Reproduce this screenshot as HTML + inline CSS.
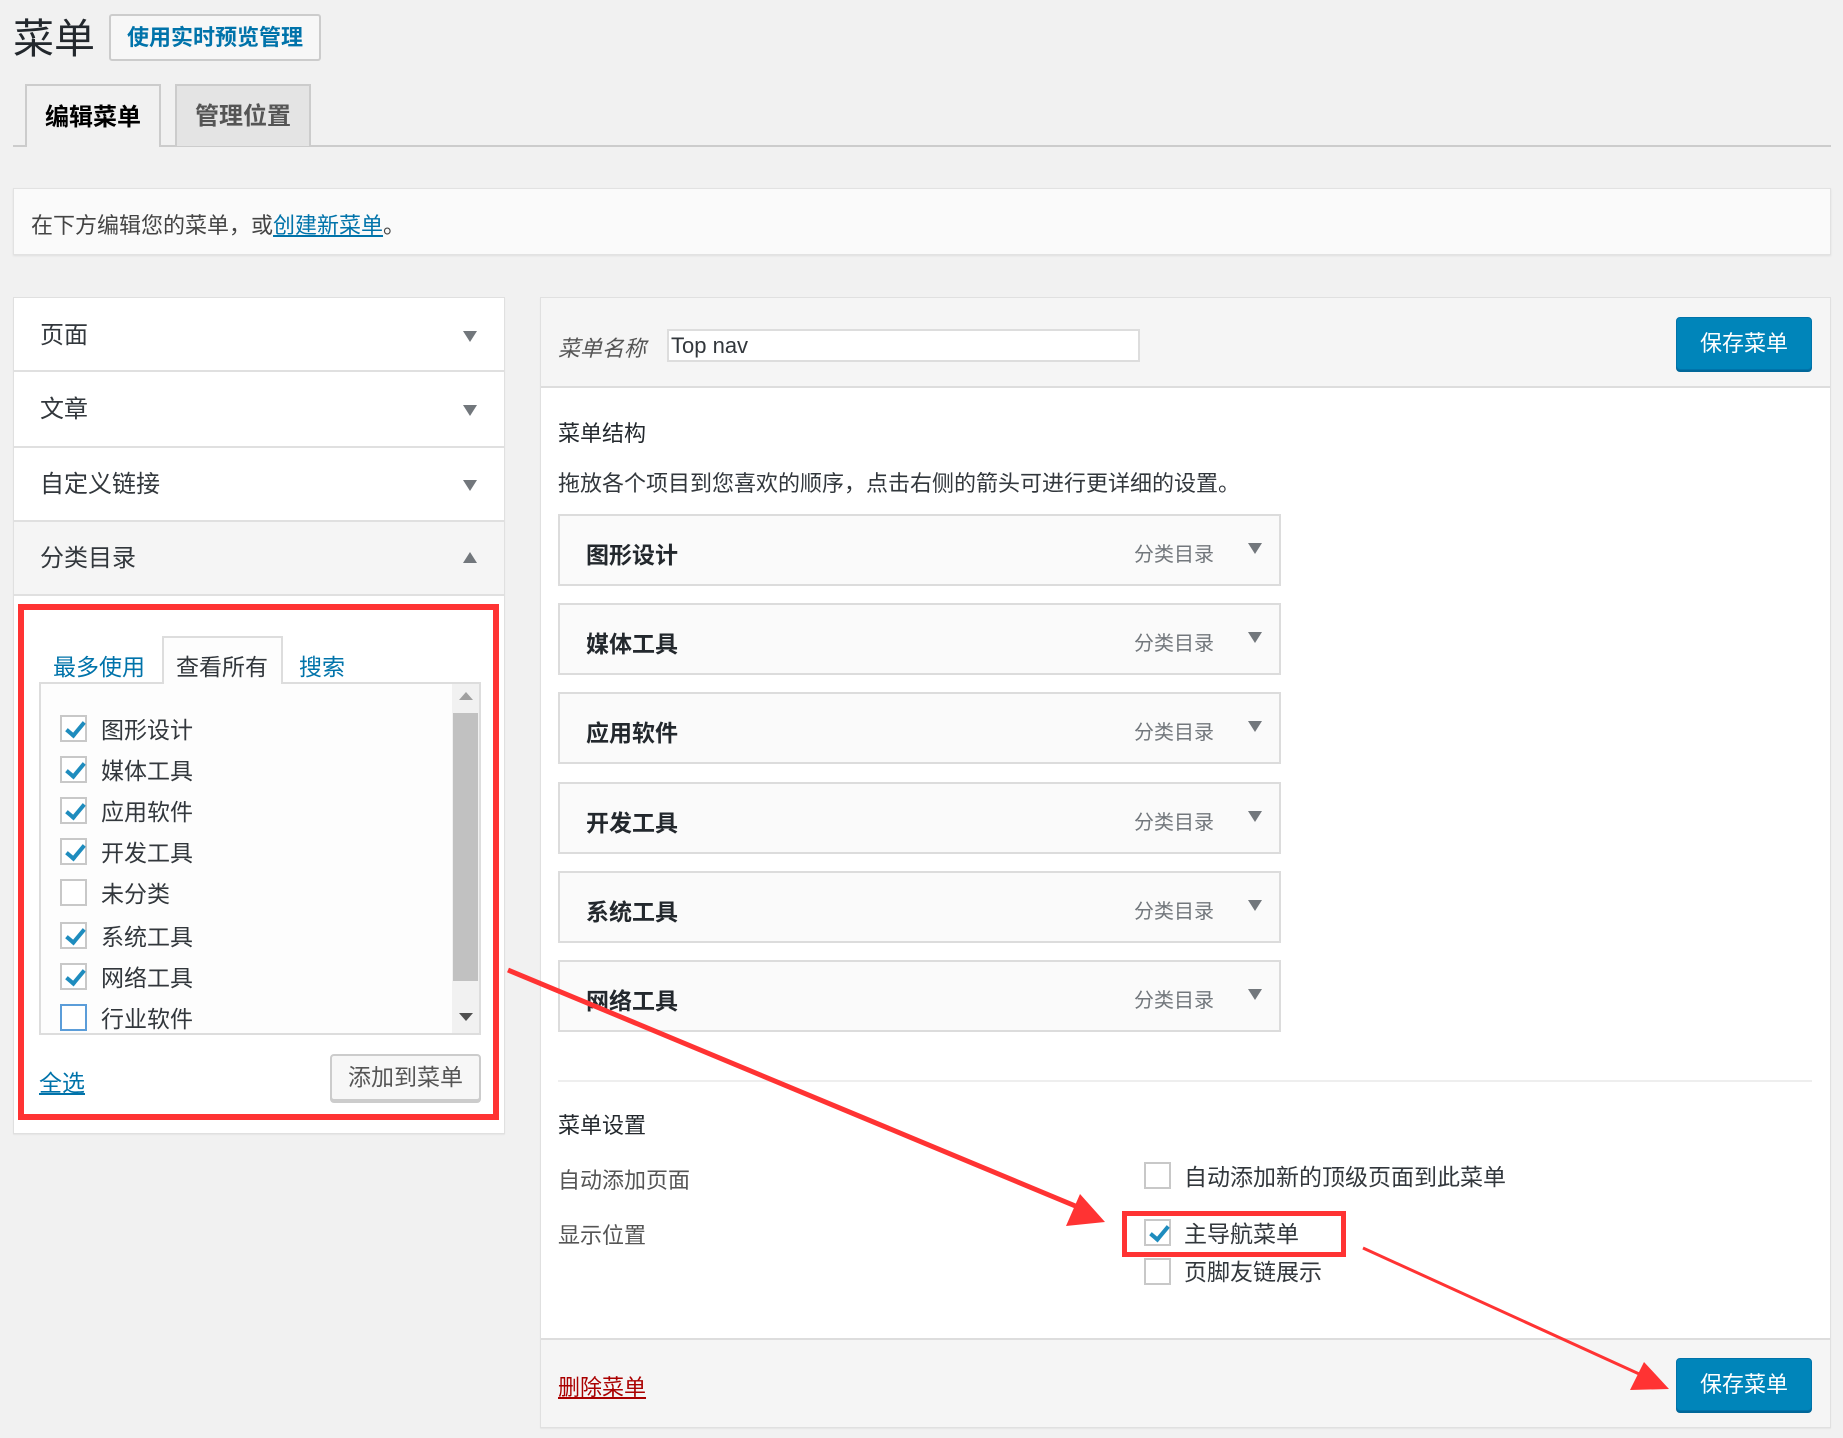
<!DOCTYPE html>
<html><head><meta charset="utf-8">
<style>
*{box-sizing:border-box;margin:0;padding:0}
body{width:1843px;height:1438px;background:#f1f1f1;font-family:"Liberation Sans","Noto Sans CJK SC",sans-serif;color:#23282d;position:relative;overflow:hidden;font-size:22px}
.a{position:absolute}
.box{background:#fff;border:1px solid #e0e0e0;box-shadow:0 1px 1px rgba(0,0,0,.05)}
.tri{position:absolute;width:0;height:0;border-left:7px solid transparent;border-right:7px solid transparent;border-top:11px solid #72777c}
.triu{position:absolute;width:0;height:0;border-left:7px solid transparent;border-right:7px solid transparent;border-bottom:11px solid #72777c}
.cb{position:absolute;width:27px;height:27px;border:2px solid #c8c8c8;background:#fff}
.cb.on::after{content:"";position:absolute;left:8px;top:1px;width:7px;height:15px;border:solid #1e8cbe;border-width:0 4px 4px 0;transform:rotate(40deg)}
.lbl{position:absolute;font-size:23px;color:#32373c;line-height:28px}
.item{position:absolute;left:558px;width:723px;height:72px;background:#fafafa;border:2px solid #dcdcdc}
.item b{position:absolute;left:26px;top:20px;font-size:23px;color:#23282d}
.item span{position:absolute;left:574px;top:22px;font-size:20px;color:#72777c}
.item .tri{left:688px;top:27px}
.btnp{position:absolute;width:136px;height:53px;background:#0085ba;border:1px solid #0073aa;border-radius:4px;box-shadow:0 2px 0 #006799;color:#fff;font-size:22px;text-align:center;line-height:51px}
</style></head><body>
<div class="a" style="left:13px;top:14px;font-size:41px;line-height:50px;color:#23282d">菜单</div>
<div class="a" style="left:109px;top:14px;width:212px;height:47px;border:2px solid #ccc;border-radius:3px;background:#f7f7f7;color:#0073aa;font-weight:bold;font-size:22px;line-height:43px;text-align:center">使用实时预览管理</div>
<div class="a" style="left:13px;top:145px;width:1818px;height:2px;background:#ccc"></div>
<div class="a" style="left:25px;top:84px;width:136px;height:63px;background:#f1f1f1;border:2px solid #ccc;border-bottom:none;font-weight:bold;font-size:24px;line-height:63px;text-align:center;color:#000">编辑菜单</div>
<div class="a" style="left:175px;top:84px;width:136px;height:62px;background:#e4e4e4;border:2px solid #ccc;border-bottom:none;font-weight:bold;font-size:24px;line-height:62px;text-align:center;color:#555">管理位置</div>
<div class="a" style="left:13px;top:188px;width:1818px;height:67px;background:#fafafa;border:1px solid #e2e2e2;box-shadow:0 1px 2px rgba(0,0,0,.08)"></div>
<div class="a" style="left:31px;top:208px;font-size:22px;color:#444">在下方编辑您的菜单，或<span style="color:#0073aa;text-decoration:underline">创建新菜单</span>。</div>

<!-- left panel -->
<div class="a box" style="left:13px;top:297px;width:492px;height:837px"></div>
<div class="a" style="left:14px;top:298px;width:490px;height:74px;border-bottom:2px solid #e0e0e0"></div>
<div class="lbl" style="left:40px;top:322px;font-size:24px">页面</div><div class="tri" style="left:463px;top:331px"></div>
<div class="a" style="left:14px;top:374px;width:490px;height:74px;border-bottom:2px solid #e0e0e0"></div>
<div class="lbl" style="left:40px;top:396px;font-size:24px">文章</div><div class="tri" style="left:463px;top:405px"></div>
<div class="a" style="left:14px;top:448px;width:490px;height:74px;border-bottom:2px solid #e0e0e0"></div>
<div class="lbl" style="left:40px;top:471px;font-size:24px">自定义链接</div><div class="tri" style="left:463px;top:480px"></div>
<div class="a" style="left:14px;top:522px;width:490px;height:74px;background:#f5f5f5;border-bottom:2px solid #e0e0e0"></div>
<div class="lbl" style="left:40px;top:545px;font-size:24px">分类目录</div><div class="triu" style="left:463px;top:552px"></div>

<div class="a" style="left:18px;top:604px;width:481px;height:516px;border:6px solid #f33"></div>
<div class="a" style="left:53px;top:648px;font-size:23px;color:#0073aa">最多使用</div>
<div class="a" style="left:162px;top:636px;width:121px;height:48px;background:#fdfdfd;border:2px solid #ddd;border-bottom:none;z-index:2"></div>
<div class="a" style="left:176px;top:648px;font-size:23px;color:#32373c;z-index:3">查看所有</div>
<div class="a" style="left:299px;top:648px;font-size:23px;color:#0073aa">搜索</div>
<div class="a" style="left:39px;top:682px;width:442px;height:353px;border:2px solid #ddd;background:#fdfdfd"></div>
<div class="a" style="left:452px;top:684px;width:27px;height:349px;background:#f1f1f1"></div>
<div class="triu" style="left:459px;top:692px;border-bottom-color:#a0a0a0;border-bottom-width:8px"></div>
<div class="a" style="left:453px;top:713px;width:25px;height:268px;background:#c1c1c1"></div>
<div class="tri" style="left:459px;top:1013px;border-top-color:#505050;border-top-width:8px"></div>

<div class="cb on" style="left:60px;top:715px"></div><div class="lbl" style="left:101px;top:716px">图形设计</div>
<div class="cb on" style="left:60px;top:756px"></div><div class="lbl" style="left:101px;top:757px">媒体工具</div>
<div class="cb on" style="left:60px;top:797px"></div><div class="lbl" style="left:101px;top:798px">应用软件</div>
<div class="cb on" style="left:60px;top:838px"></div><div class="lbl" style="left:101px;top:839px">开发工具</div>
<div class="cb" style="left:60px;top:879px"></div><div class="lbl" style="left:101px;top:880px">未分类</div>
<div class="cb on" style="left:60px;top:922px"></div><div class="lbl" style="left:101px;top:923px">系统工具</div>
<div class="cb on" style="left:60px;top:963px"></div><div class="lbl" style="left:101px;top:964px">网络工具</div>
<div class="cb" style="left:60px;top:1004px;border-color:#5b9dd9"></div><div class="lbl" style="left:101px;top:1005px">行业软件</div>

<div class="a" style="left:39px;top:1064px;font-size:23px;color:#0073aa;text-decoration:underline">全选</div>
<div class="a" style="left:330px;top:1054px;width:151px;height:47px;border:2px solid #ccc;border-radius:4px;background:#f7f7f7;box-shadow:0 2px 0 #ccc;font-size:23px;line-height:43px;text-align:center;color:#555">添加到菜单</div>

<!-- right panel -->
<div class="a box" style="left:540px;top:297px;width:1291px;height:1131px"></div>
<div class="a" style="left:541px;top:298px;width:1289px;height:90px;background:#f5f5f5;border-bottom:2px solid #ddd"></div>
<div class="a" style="left:558px;top:331px;font-size:22px;font-style:italic;color:#555">菜单名称</div>
<div class="a" style="left:667px;top:329px;width:473px;height:33px;background:#fff;border:2px solid #ddd;font-size:22px;line-height:29px;padding-left:2px;color:#32373c">Top nav</div>
<div class="btnp" style="left:1676px;top:317px">保存菜单</div>
<div class="a" style="left:558px;top:416px;font-size:22px;color:#23282d">菜单结构</div>
<div class="a" style="left:558px;top:466px;font-size:22px;color:#32373c">拖放各个项目到您喜欢的顺序，点击右侧的箭头可进行更详细的设置。</div>

<div class="item" style="top:514px"><b>图形设计</b><span>分类目录</span><div class="tri"></div></div>
<div class="item" style="top:603px"><b>媒体工具</b><span>分类目录</span><div class="tri"></div></div>
<div class="item" style="top:692px"><b>应用软件</b><span>分类目录</span><div class="tri"></div></div>
<div class="item" style="top:782px"><b>开发工具</b><span>分类目录</span><div class="tri"></div></div>
<div class="item" style="top:871px"><b>系统工具</b><span>分类目录</span><div class="tri"></div></div>
<div class="item" style="top:960px"><b>网络工具</b><span>分类目录</span><div class="tri"></div></div>

<div class="a" style="left:558px;top:1080px;width:1254px;height:2px;background:#eee"></div>
<div class="a" style="left:558px;top:1108px;font-size:22px;color:#23282d">菜单设置</div>
<div class="a" style="left:558px;top:1163px;font-size:22px;color:#555">自动添加页面</div>
<div class="a" style="left:558px;top:1218px;font-size:22px;color:#555">显示位置</div>
<div class="cb" style="left:1144px;top:1162px"></div><div class="lbl" style="left:1184px;top:1163px">自动添加新的顶级页面到此菜单</div>
<div class="cb on" style="left:1144px;top:1219px"></div><div class="lbl" style="left:1184px;top:1220px">主导航菜单</div>
<div class="cb" style="left:1144px;top:1258px"></div><div class="lbl" style="left:1184px;top:1258px">页脚友链展示</div>
<div class="a" style="left:1122px;top:1211px;width:224px;height:46px;border:5px solid #f33"></div>

<div class="a" style="left:541px;top:1338px;width:1289px;height:89px;background:#f5f5f5;border-top:2px solid #ddd"></div>
<div class="a" style="left:558px;top:1370px;font-size:22px;color:#a00;text-decoration:underline">删除菜单</div>
<div class="btnp" style="left:1676px;top:1358px">保存菜单</div>

<svg class="a" style="left:0;top:0" width="1843" height="1438">
<line x1="508" y1="970" x2="1085" y2="1210" stroke="#f33" stroke-width="5"/>
<polygon points="1105,1222 1066,1226 1080,1194" fill="#f33"/>
<line x1="1363" y1="1248" x2="1648" y2="1378" stroke="#f33" stroke-width="3"/>
<polygon points="1669,1389 1630,1390 1644,1362" fill="#f33"/>
</svg>
</body></html>
